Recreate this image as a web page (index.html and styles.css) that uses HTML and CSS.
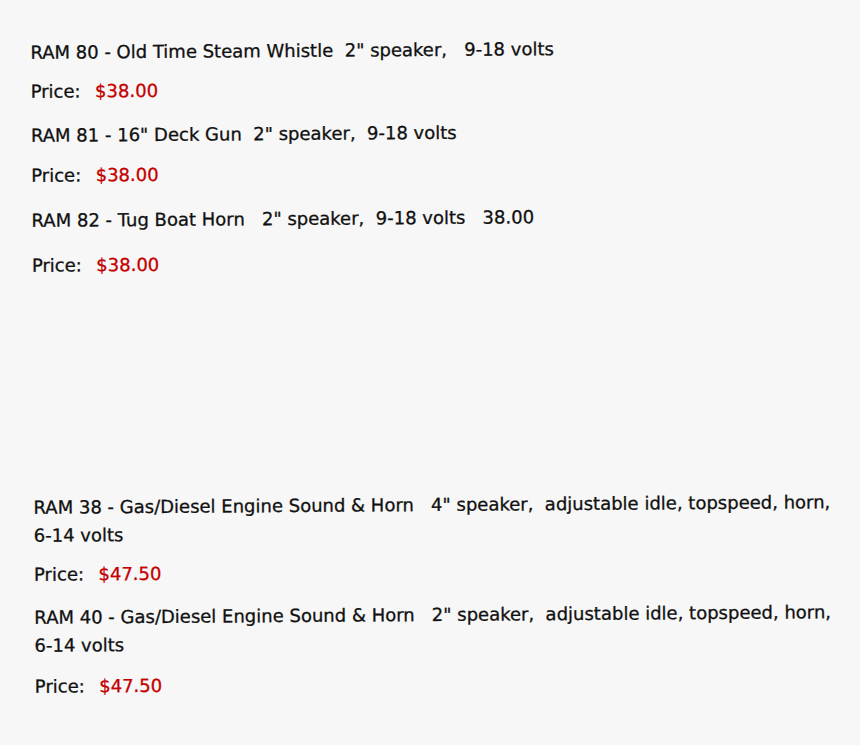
FILE: index.html
```html
<!DOCTYPE html>
<html>
<head>
<meta charset="utf-8">
<link rel="stylesheet" href="styles.css">
</head>
<body>
<div class="page">
  <section class="group group-top">
    <p class="item">RAM 80 - Old Time Steam Whistle  2" speaker,   9-18 volts</p>
    <p class="price price-1">Price:  <span class="amount">$38.00</span></p>
    <p class="item">RAM 81 - 16" Deck Gun  2" speaker,  9-18 volts</p>
    <p class="price price-2">Price:  <span class="amount">$38.00</span></p>
    <p class="item item-3">RAM 82 - Tug Boat Horn   2" speaker,  9-18 volts   38.00</p>
    <p class="price price-3">Price:  <span class="amount">$38.00</span></p>
  </section>
  <section class="group group-bottom">
    <p class="item">RAM 38 - Gas/Diesel Engine Sound &amp; Horn   4" speaker,  adjustable idle, topspeed, horn, 6-14 volts</p>
    <p class="price price-4">Price:  <span class="amount">$47.50</span></p>
    <p class="item">RAM 40 - Gas/Diesel Engine Sound &amp; Horn   2" speaker,  adjustable idle, topspeed, horn, 6-14 volts</p>
    <p class="price price-5">Price:  <span class="amount">$47.50</span></p>
  </section>
</div>
</body>
</html>
```
FILE: styles.css
```css
html, body {
  margin: 0;
  padding: 0;
  background: #f7f7f7;
}
body {
  width: 860px;
  height: 745px;
  overflow: hidden;
  font-family: "DejaVu Sans", "Liberation Sans", sans-serif;
  font-size: 18px;
  color: #111;
  -webkit-text-stroke: 0.3px currentColor;
}
.page {
  padding: 41px 0 0 30px;
  transform: rotate(-0.4deg);
  transform-origin: 0 0;
}
p {
  margin: 0;
  white-space: pre-wrap;
}
.group-top p {
  line-height: 24px;
}
.group-top .price-1 { margin: 15px 0 20px; }
.group-top .price-2 { margin: 16px 0 21px; }
.group-top .price-3 { margin: 21px 0 0; }

.group-bottom {
  margin-top: 216px;
  width: 812px;
}
.group-bottom .item {
  line-height: 28px;
}
.group-bottom .price {
  line-height: 24px;
}
.group-bottom .price-4 { margin: 13px 0 17px; }
.group-bottom .price-5 { margin: 15px 0 0; }
.amount {
  margin-left: 3px;
  color: #c40000;
}
```
